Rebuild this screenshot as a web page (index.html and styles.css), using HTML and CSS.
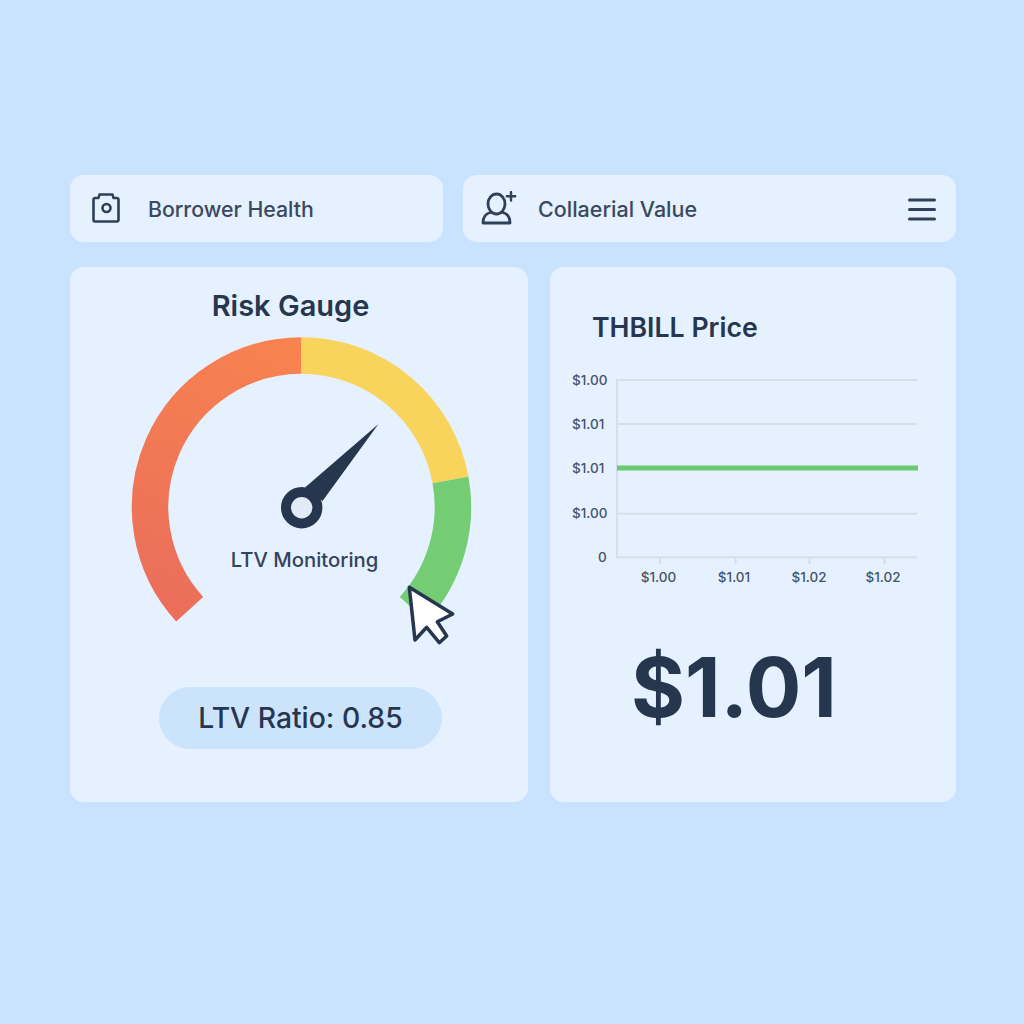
FILE: index.html
```html
<!DOCTYPE html>
<html lang="en">
<head>
<meta charset="utf-8">
<title>Borrower Health</title>
<link rel="stylesheet" href="styles.css">
</head>
<body>
<main class="dash">
  <section class="topbars">
    <div class="bar bar-left">
      <svg class="icon icon-cam" viewBox="0 0 28 30" width="28" height="30" aria-hidden="true">
        <path d="M1.500 6.500A1.500 1.500 0 0 1 3 5H6.500L7.500 1.500H20.500L21.500 5H25A1.500 1.500 0 0 1 26.500 6.500V27A1.500 1.500 0 0 1 25 28.500H3A1.500 1.500 0 0 1 1.500 27Z"/>
        <circle cx="14.500" cy="15" r="4"/>
      </svg>
      <span class="bar-label">Borrower Health</span>
    </div>
    <div class="bar bar-right">
      <svg class="icon icon-user" viewBox="0 0 36 34" width="36" height="34" aria-hidden="true">
        <ellipse cx="15.500" cy="13" rx="8.500" ry="10"/>
        <path d="M9.500 21.500C5 22.500 2 26 2 32H29C29 26 26 22.500 21.500 21.500"/>
        <path class="plus" d="M30 1V9.500M25.800 5.300H34.200"/>
      </svg>
      <span class="bar-label">Collaerial Value</span>
      <svg class="icon icon-menu" viewBox="0 0 28 24" width="28" height="24" aria-hidden="true">
        <path d="M1.500 3H26.500M1.500 12.500H26.500M1.500 22H26.500"/>
      </svg>
    </div>
  </section>
  <section class="cards">
    <article class="card card-gauge">
      <h2 class="gauge-title">Risk Gauge</h2>
      <svg class="gauge" viewBox="120 330 360 320" width="360" height="320" role="img" aria-label="Risk gauge">
        <defs>
          <linearGradient id="redGrad" gradientUnits="userSpaceOnUse" x1="290" y1="340" x2="170" y2="620">
            <stop offset="0" stop-color="#f8834f"/>
            <stop offset="1" stop-color="#eb6d5b"/>
          </linearGradient>
        </defs>
        <path class="arc" stroke="url(#redGrad)" d="M189.700 609.200A151.500 151.500 0 0 1 301.500 355.500"/>
        <path class="arc arc-yellow" d="M301.500 355.500A151.500 151.500 0 0 1 450.500 479.900"/>
        <path class="arc arc-green" d="M450.500 479.900A151.500 151.500 0 0 1 413.300 609.200"/>
        <path class="needle" d="M378.500 424L305 487.500 322.500 501Z"/>
        <circle class="hub" cx="301.700" cy="507.700" r="15.700"/>
        <text class="gauge-label" x="304.500" y="567" text-anchor="middle">LTV Monitoring</text>
        <path class="cursor" d="M409.300 587.300L452.700 614 437.300 621.700 446.700 636 439.300 642.700 426.700 627.300 415 640Z"/>
      </svg>
      <div class="pill">LTV Ratio: 0.85</div>
    </article>
    <article class="card card-price">
      <h2 class="price-title">THBILL Price</h2>
      <svg class="chart" viewBox="560 365 380 225" width="380" height="225" role="img" aria-label="THBILL price chart">
        <path class="grid" d="M617 380H917M617 424H917M617 513.700H917M617 379V558M617 557.300H917M660 557.300V564M735.500 557.300V564M809.500 557.300V564M884.500 557.300V564"/>
        <path class="line" d="M617 468H918"/>
        <g class="ylab">
          <text x="572" y="385">$1.00</text>
          <text x="572" y="429">$1.01</text>
          <text x="572" y="473">$1.01</text>
          <text x="572" y="518">$1.00</text>
          <text x="598" y="562">0</text>
        </g>
        <g class="xlab" text-anchor="middle">
          <text x="658.500" y="582">$1.00</text>
          <text x="734" y="582">$1.01</text>
          <text x="809" y="582">$1.02</text>
          <text x="883" y="582">$1.02</text>
        </g>
      </svg>
      <div class="price-value">$1.01</div>
    </article>
  </section>
</main>
</body>
</html>
```
FILE: styles.css
```css
* { box-sizing: border-box; }
html, body { margin: 0; height: 100%; }
body {
  background: #c9e2fd;
  font-family: Inter, "Noto Sans", "Liberation Sans", sans-serif;
  color: #27364f;
  padding: 175px 68px 0 70px;
}
.dash { display: flex; flex-direction: column; gap: 25px; width: 886px; }
.topbars { display: grid; grid-template-columns: 373px 493px; gap: 20px; }
.bar {
  height: 67px;
  background: #e5f1fe;
  border-radius: 14px;
  display: flex;
  align-items: center;
}
.bar-left { padding-left: 22px; }
.bar-right { padding-left: 18px; padding-right: 20px; }
.bar-label { font-size: 21.300px; font-weight: 500; color: #3a4860; padding-top: 1px; }
.bar-left .bar-label { margin-left: 28px; }
.bar-right .bar-label { margin-left: 21px; font-size: 21.500px; }
.icon { display: block; flex: none; fill: none; stroke: #2f4059; stroke-linecap: round; stroke-linejoin: round; }
.icon-cam { stroke-width: 2.600; margin-top: -1px; }
.icon-user { stroke-width: 2.800; margin-top: -1px; }
.icon-user .plus { stroke-width: 2.400; }
.icon-menu { stroke-width: 3; margin-left: auto; }
.cards { display: grid; grid-template-columns: 458px 406px; gap: 22px; }
.card { height: 535px; background: #e5f1fe; border-radius: 14px; position: relative; }
.gauge-title {
  margin: 0;
  padding: 22px 17px 0 0;
  height: 63px;
  text-align: center;
  font-size: 29px;
  line-height: 34px;
  font-weight: 600;
  color: #27364f;
}
.gauge { display: block; margin-left: 50px; }
.arc { fill: none; stroke-width: 36.500; }
.arc-yellow { stroke: #f9d45c; }
.arc-green { stroke: #74cd73; }
.needle { fill: #27364f; }
.hub { fill: #e1ebf6; stroke: #27364f; stroke-width: 10; }
.gauge-label { font-size: 20.300px; font-weight: 500; fill: #34435c; }
.cursor { fill: #fff; stroke: #27364f; stroke-width: 3.500; stroke-linejoin: round; }
.pill {
  width: 283px;
  height: 62px;
  margin: 37px 0 0 89px;
  border-radius: 31px;
  background: #cce3fc;
  display: flex;
  align-items: center;
  justify-content: center;
  font-size: 28.300px;
  font-weight: 500;
  color: #27364f;
}
.price-title {
  margin: 0;
  padding: 43px 0 0 42px;
  height: 98px;
  font-size: 26.700px;
  line-height: 34px;
  font-weight: 600;
  color: #27364f;
}
.chart { display: block; margin-left: 10px; }
.grid { fill: none; stroke: #d6dee9; stroke-width: 2; }
.line { fill: none; stroke: #6bc972; stroke-width: 5; }
.ylab text, .xlab text { font-size: 13.500px; font-weight: 500; fill: #46536a; }
.price-value {
  margin: 49px 0 0 81px;
  font-size: 82.500px;
  line-height: 96px;
  font-weight: 700;
  color: #27364f;
}
```
